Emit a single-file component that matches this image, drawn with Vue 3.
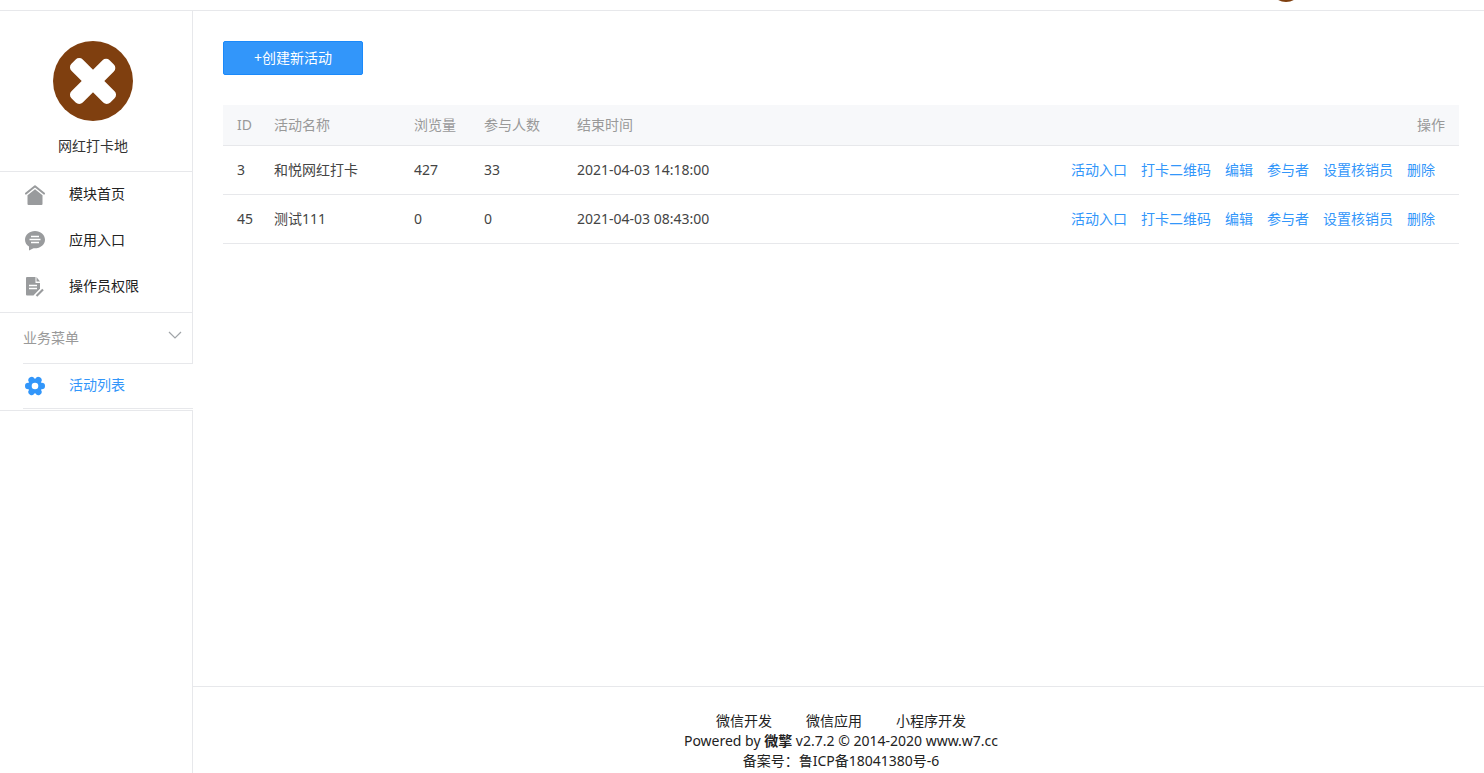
<script setup>
const menu = [
  { label: '模块首页', icon: 'home' },
  { label: '应用入口', icon: 'chat' },
  { label: '操作员权限', icon: 'doc' },
]
const rows = [
  { id: 3, name: '和悦网红打卡', views: 427, people: 33, end: '2021-04-03 14:18:00' },
  { id: 45, name: '测试111', views: 0, people: 0, end: '2021-04-03 08:43:00' },
]
const actions = ['活动入口', '打卡二维码', '编辑', '参与者', '设置核销员', '删除']
const footerLinks = ['微信开发', '微信应用', '小程序开发']
</script>

<template>
  <div class="page">
    <header class="topbar"><span class="user-avatar"></span></header>
    <div class="body">
      <aside class="sidebar">
        <div class="profile">
          <svg class="avatar" viewBox="0 0 80 80" aria-hidden="true">
            <circle cx="40" cy="40" r="40" fill="#7f3f0f" />
            <g fill="#fff">
              <rect x="12.500" y="32" width="55" height="16" rx="5" transform="rotate(45 40 40)" />
              <rect x="12.500" y="32" width="54" height="16" rx="5" transform="rotate(-45 40 40)" />
            </g>
          </svg>
          <div class="name">网红打卡地</div>
        </div>
        <nav class="menu">
          <a v-for="m in menu" :key="m.label" href="#" class="item">
            <svg class="icon" viewBox="0 0 20 20" aria-hidden="true">
              <template v-if="m.icon === 'home'">
                <path d="M1 8.600L10 1.200L19 8.600" fill="none" stroke="#999b9d" stroke-width="2" stroke-linecap="round" stroke-linejoin="round" />
                <path d="M2.500 10.300L10 4.200L17.500 10.300V19Q17.500 20 16.500 20H3.500Q2.500 20 2.500 19Z" fill="#999b9d" />
              </template>
              <template v-else-if="m.icon === 'chat'">
                <path d="M10 0C4.500 0 0 3.800 0 8.700C0 11.700 1.500 14 4 15.500V19.500L8.500 17.300C15.500 17.700 20 13.500 20 8.700C20 3.800 15.500 0 10 0Z" fill="#999b9d" />
                <path d="M6 5.500H14M4.500 8.500H15.500M6 11.500H14" stroke="#fff" stroke-width="1.300" />
              </template>
              <template v-else>
                <path d="M2 0H10.500V6H15V12L9 18.500H2Q1 18.500 1 17.500V1Q1 0 2 0Z" fill="#999b9d" />
                <path d="M11.500 0L15 4.500H11.500Z" fill="#999b9d" />
                <path d="M4 8.500H12M4 11.500H12" stroke="#fff" stroke-width="1.300" />
                <path d="M10 20L19 11" stroke="#fff" stroke-width="4.500" />
                <path d="M11.500 19L18 12.500" stroke="#999b9d" stroke-width="2.200" />
              </template>
            </svg>
            <span>{{ m.label }}</span>
          </a>
        </nav>
        <button type="button" class="group">
          <span>业务菜单</span>
          <svg class="chevron" viewBox="0 0 14 8" aria-hidden="true">
            <path d="M1 1L7 7L13 1" fill="none" stroke="#a0a4a8" stroke-width="1.200" />
          </svg>
        </button>
        <div class="submenu">
          <a href="#" class="item active">
            <svg class="icon" viewBox="0 0 20 20" aria-hidden="true">
              <g fill="#3296fa">
                <circle cx="10" cy="10" r="7.200" />
                <circle v-for="n in 6" :key="n" cx="16.700" cy="10" r="3.300" :transform="`rotate(${n * 60} 10 10)`" />
              </g>
              <circle cx="10" cy="10" r="3.300" fill="#fff" />
            </svg>
            <span>活动列表</span>
          </a>
        </div>
        <div class="rest"></div>
      </aside>
      <div class="main">
        <main class="content">
          <button type="button" class="create">+创建新活动</button>
          <table class="table">
            <colgroup>
              <col class="c-id"><col class="c-name"><col class="c-views"><col class="c-people"><col class="c-end"><col>
            </colgroup>
            <thead>
              <tr>
                <th>ID</th><th>活动名称</th><th>浏览量</th><th>参与人数</th><th>结束时间</th><th class="right">操作</th>
              </tr>
            </thead>
            <tbody>
              <tr v-for="r in rows" :key="r.id">
                <td>{{ r.id }}</td>
                <td>{{ r.name }}</td>
                <td>{{ r.views }}</td>
                <td>{{ r.people }}</td>
                <td>{{ r.end }}</td>
                <td class="right">
                  <div class="actions"><a v-for="a in actions" :key="a" href="#">{{ a }}</a></div>
                </td>
              </tr>
            </tbody>
          </table>
        </main>
        <footer class="footer">
          <div class="links"><a v-for="l in footerLinks" :key="l" href="#">{{ l }}</a></div>
          <div>Powered by <a href="#"><b>微擎</b></a> v2.7.2 © 2014-2020 <a href="#">www.w7.cc</a></div>
          <div>备案号：<a href="#">鲁ICP备18041380号-6</a></div>
        </footer>
      </div>
    </div>
  </div>
</template>

<style>
body { margin: 0; background: #fff; }
</style>

<style scoped>
* { box-sizing: border-box; }
.page {
  height: 100vh;
  display: flex;
  flex-direction: column;
  overflow: hidden;
  font: 14px/20px "Noto Sans", "Noto Sans CJK SC", sans-serif;
  color: #222;
}
a { color: inherit; text-decoration: none; }
button { font: inherit; cursor: pointer; }
.topbar {
  flex: none;
  height: 11px;
  border-bottom: 1px solid #e7e8eb;
  display: flex;
  justify-content: flex-end;
  align-items: flex-end;
  padding: 0 182px 8px 0;
  overflow: hidden;
}
.user-avatar { flex: none; width: 32px; height: 32px; border-radius: 50%; background: #7f3f0f; }
.body { flex: 1; min-height: 0; display: flex; }
.sidebar { flex: none; width: 193px; display: flex; flex-direction: column; }
.profile {
  padding: 30px 6px 15px 0;
  border-right: 1px solid #e7e8eb;
  border-bottom: 1px solid #e7e8eb;
  text-align: center;
  color: #333;
}
.avatar { display: block; width: 80px; height: 80px; margin: 0 auto 15px; }
.menu { padding-bottom: 2px; border-right: 1px solid #e7e8eb; }
.item { display: flex; align-items: center; height: 46px; padding-left: 25px; gap: 24px; }
.icon { width: 20px; height: 20px; }
.item span { padding-bottom: 2px; }
.group {
  display: flex;
  align-items: center;
  justify-content: space-between;
  height: 51px;
  padding: 0 10px 0 23px;
  border: solid #e7e8eb;
  border-width: 1px 1px 0 0;
  background: none;
  color: #999;
}
.chevron { width: 14px; height: 8px; margin-bottom: 6px; }
.submenu {
  margin-left: 23px;
  margin-bottom: 1px;
  border: solid #e7e8eb;
  border-width: 1px 0;
}
.active { height: 44px; padding-left: 2px; color: #3296fa; }
.rest { flex: 1; border: solid #e7e8eb; border-width: 1px 1px 0 0; }
.main { flex: 1; min-width: 0; display: flex; flex-direction: column; }
.content { flex: 1; padding: 30px 25px 0 30px; }
.create {
  display: block;
  min-width: 140px;
  height: 34px;
  padding: 0 29px;
  border: 1px solid #1a89fa;
  border-radius: 2px;
  background: #3296fa;
  color: #fff;
}
.table { width: 100%; margin-top: 30px; border-collapse: separate; border-spacing: 0; table-layout: fixed; }
.c-id { width: 37px; }
.c-name { width: 140px; }
.c-views { width: 70px; }
.c-people { width: 93px; }
.c-end { width: 200px; }
th, td { padding: 0 0 0 14px; text-align: left; white-space: nowrap; border-bottom: 1px solid #e7e8eb; }
th { height: 41px; background: #f7f8fa; color: #999; font-weight: 400; }
td { height: 49px; color: #444; }
th.right { text-align: right; padding-right: 14px; }
td.right { padding-right: 24px; }
.actions { display: flex; justify-content: flex-end; gap: 14px; color: #3296fa; }
.footer { flex: none; border-top: 1px solid #e7e8eb; padding: 24px 0 2px 5px; text-align: center; }
.links { display: flex; justify-content: center; gap: 34px; }
</style>
